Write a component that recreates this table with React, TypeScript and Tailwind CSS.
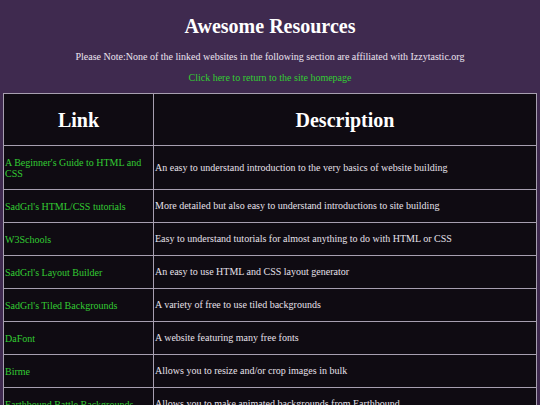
const ROWS: [string, string][] = [
  ["A Beginner's Guide to HTML and CSS", 'An easy to understand introduction to the very basics of website building'],
  ["SadGrl's HTML/CSS tutorials", 'More detailed but also easy to understand introductions to site building'],
  ['W3Schools', 'Easy to understand tutorials for almost anything to do with HTML or CSS'],
  ["SadGrl's Layout Builder", 'An easy to use HTML and CSS layout generator'],
  ["SadGrl's Tiled Backgrounds", 'A variety of free to use tiled backgrounds'],
  ['DaFont', 'A website featuring many free fonts'],
  ['Birme', 'Allows you to resize and/or crop images in bulk'],
  ['Earthbound Battle Backgrounds', 'Allows you to make animated backgrounds from Earthbound'],
];

export default function App() {
  return (
    <div className="min-h-screen bg-[#3f2a4f] font-['Liberation_Serif',serif] text-white pt-[12px]">
      <h1 className="text-center text-[20px] font-bold leading-[28px]">Awesome Resources</h1>
      <p className="text-center text-[10px] text-[#ece4f0] mt-[10px] leading-[14px]">
        Please Note:None of the linked websites in the following section are affiliated with Izzytastic.org
      </p>
      <p className="text-center text-[10px] mt-[7px] leading-[14px]">
        <a className="text-[#33cc33]">Click here to return to the site homepage</a>
      </p>
      <table className="mx-[3px] mt-[8px] w-[534px] border-collapse bg-[#0f0b12] border border-[#a79fb0]">
        <thead>
          <tr className="h-[52px]">
            <th className="w-[150px] border border-[#a79fb0] text-[20px] font-bold">Link</th>
            <th className="border border-[#a79fb0] text-[20px] font-bold">Description</th>
          </tr>
        </thead>
        <tbody>
          {ROWS.map(([link, desc], i) => (
            <tr key={i} className={i === 0 ? 'h-[44px]' : 'h-[33px]'}>
              <td className="border border-[#a79fb0] px-px text-[10px] leading-[11px] text-[#33cc33] align-middle">
                <a>{link}</a>
              </td>
              <td className="border border-[#a79fb0] px-px text-[10px] leading-[12px] text-[#e6e0ea] align-middle">
                {desc}
              </td>
            </tr>
          ))}
        </tbody>
      </table>
    </div>
  );
}
